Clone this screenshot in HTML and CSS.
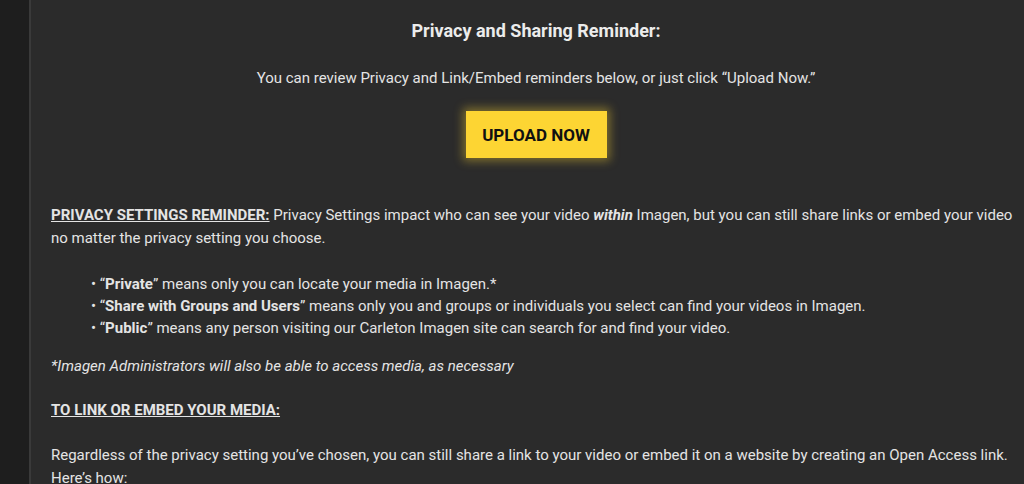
FILE: index.html
```html
<!DOCTYPE html>
<html lang="en">
<head>
    <meta charset="UTF-8">
    <meta name="viewport" content="width=device-width, initial-scale=1.0">
    <title>Privacy and Sharing Reminder</title>
    <link rel="stylesheet" href="styles.css">
</head>
<body>
    <div class="layout">
        <aside class="sidebar"></aside>

        <main class="content">
            <h2 class="title">Privacy and Sharing Reminder:</h2>
            <p class="intro">You can review Privacy and Link/Embed reminders below, or just click “Upload Now.”</p>
            <div class="actions">
                <button class="upload-btn">UPLOAD NOW</button>
            </div>

            <p class="section first">
                <span class="label">PRIVACY SETTINGS REMINDER:</span> Privacy Settings impact who can see your video <b><i>within</i></b> Imagen, but you can still share links or embed your video no matter the privacy setting you choose.
            </p>

            <ul class="options">
                <li>“<b>Private</b>” means only you can locate your media in Imagen.*</li>
                <li>“<b>Share with Groups and Users</b>” means only you and groups or individuals you select can find your videos in Imagen.</li>
                <li>“<b>Public</b>” means any person visiting our Carleton Imagen site can search for and find your video.</li>
            </ul>

            <p class="note">*Imagen Administrators will also be able to access media, as necessary</p>

            <p class="section"><span class="label">TO LINK OR EMBED YOUR MEDIA:</span></p>

            <p class="section">Regardless of the privacy setting you’ve chosen, you can still share a link to your video or embed it on a website by creating an Open Access link. Here’s how:</p>
        </main>
    </div>
</body>
</html>
```

FILE: styles.css
```css
body {
    margin: 0;
    background-color: #2b2b2b;
    font-family: Roboto, "Liberation Sans", sans-serif;
    color: #e4e4e4;
    font-size: 15px;
}
.layout {
    display: flex;
    min-height: 484px;
}
.sidebar {
    width: 29px;
    flex-shrink: 0;
    background-color: #1e1e1e;
    border-right: 2px solid #3a3a3a;
}
.content {
    flex: 1;
    padding: 0 3px 0 20px;
}
.title {
    margin: 20px 0 0;
    font-size: 18px;
    font-weight: 700;
    text-align: center;
    color: #ececec;
    line-height: 22px;
}
.intro {
    margin: 25px 0 0;
    text-align: center;
    line-height: 22px;
}
.actions {
    display: flex;
    justify-content: center;
    margin-top: 22px;
}
.upload-btn {
    width: 141px;
    height: 47px;
    background-color: #fdd533;
    color: #111;
    border: none;
    font-family: Roboto, "Liberation Sans", sans-serif;
    font-size: 17px;
    font-weight: 700;
    box-shadow: 0 0 9px 3px rgba(253, 213, 51, 0.4);
    cursor: pointer;
}
.section {
    margin: 22px 0 0;
    line-height: 23px;
}
.section.first {
    margin-top: 46px;
}
.label {
    font-weight: 700;
    text-decoration: underline;
}
.options {
    list-style: none;
    margin: 23px 0 0;
    padding-left: 40px;
    line-height: 22px;
}
.options li::before {
    content: "• ";
}
.note {
    margin: 16px 0 0;
    font-style: italic;
    line-height: 22px;
}
```
